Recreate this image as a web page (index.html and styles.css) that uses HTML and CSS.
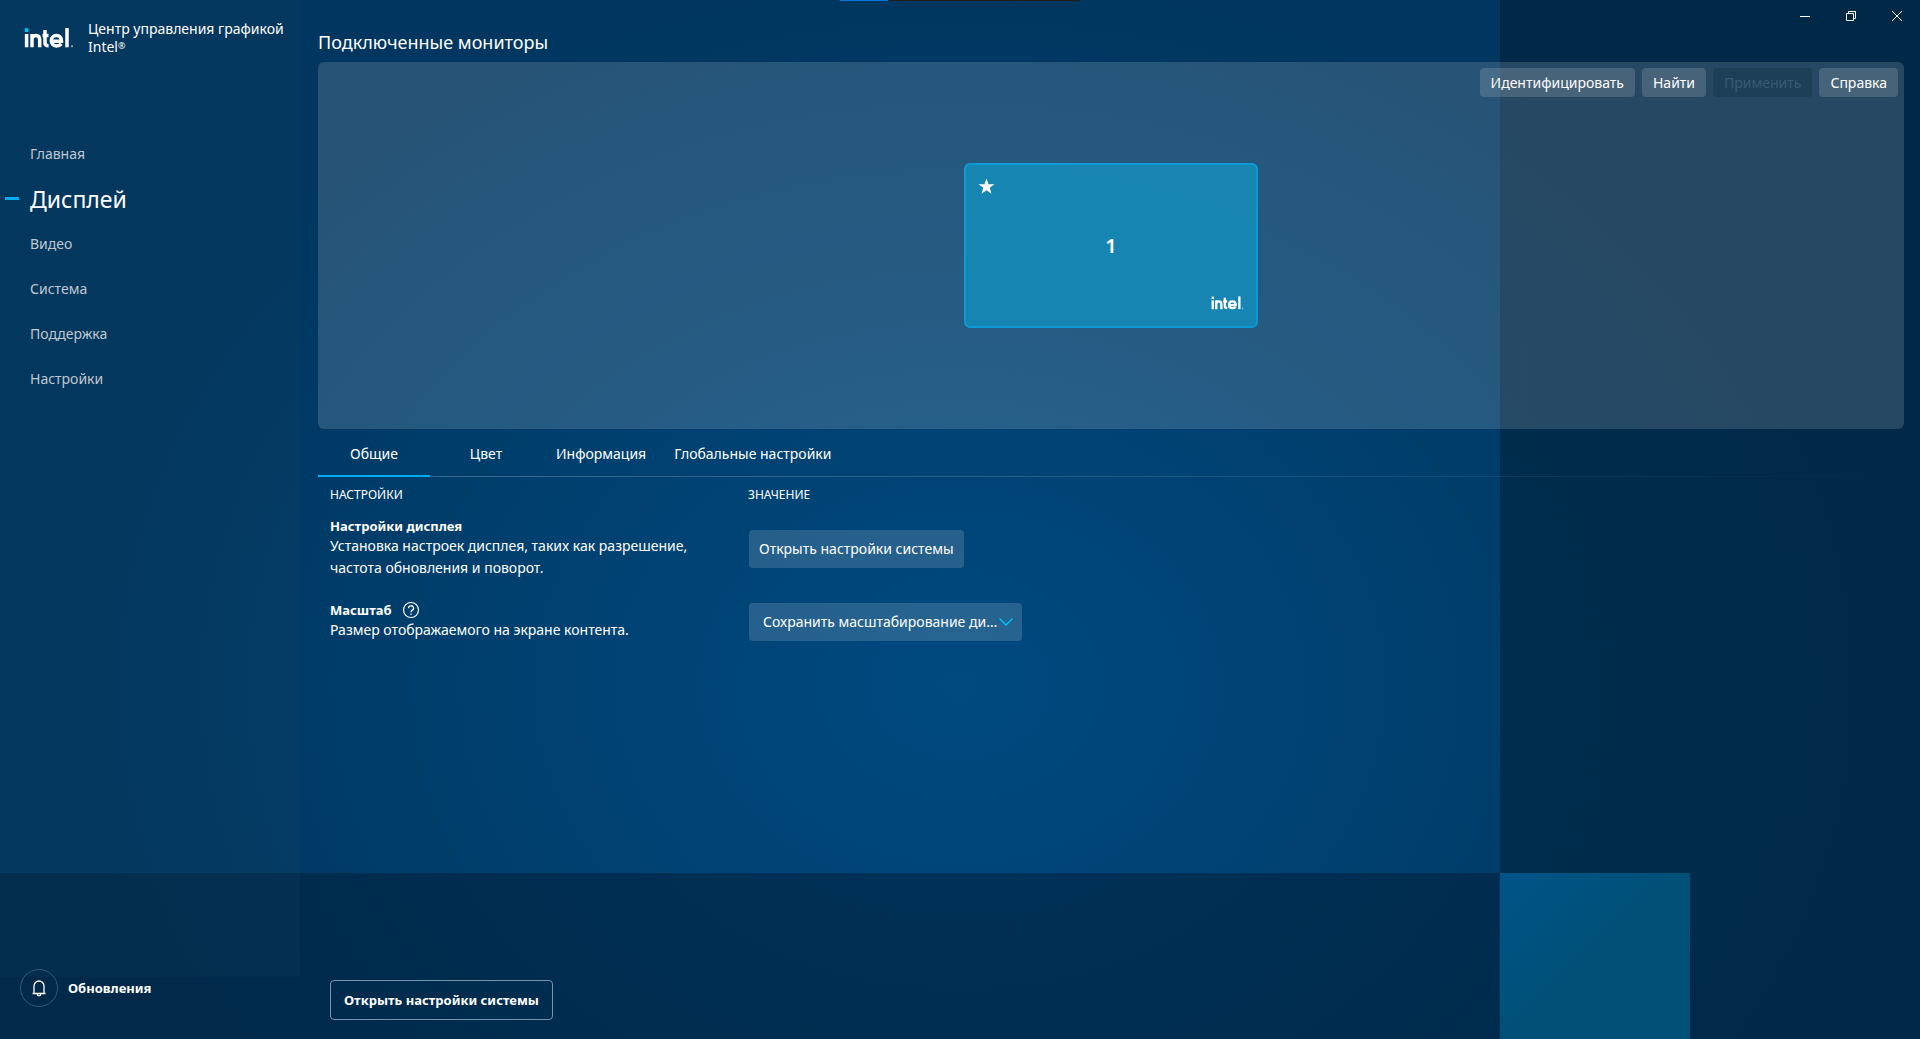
FILE: index.html
```html
<!DOCTYPE html>
<html lang="ru">
<head>
<meta charset="utf-8">
<title>Центр управления графикой Intel</title>
<link rel="stylesheet" href="styles.css">
</head>
<body>
<svg width="0" height="0" class="defs" aria-hidden="true">
  <symbol id="intel" viewBox="0 0 50 24">
    <g fill="none" stroke="#fff" stroke-width="3.5">
      <path d="M2.600 8V21.300"/>
      <path d="M8 21.300V8M8 14c0-3 1.700-4.500 4-4.500s3.700 1.500 3.700 4.300v7.500"/>
      <path d="M21 4v13c0 1.900 1 2.700 3.600 2.700M18.500 9.500h6"/>
      <path d="M28 15.200h9.500c0-3.600-2-5.700-5-5.700s-5.200 2.200-5.200 5.200 2.200 5.200 5.400 5.200c2 0 3.400-.6 4.600-2"/>
      <path d="M43 2v19.300"/>
    </g>
    <path d="M47 19.300h2v2h-2z" fill="#fff" opacity=".5"/>
    <path d="M.8 2.300h3.600v3.600H.8z"/>
  </symbol>
</svg>
<div class="app">
  <aside class="sidebar">
    <div class="brand">
      <svg class="brand-logo" role="img" aria-label="intel"><use href="#intel"/></svg>
      <span>Центр управления графикой Intel<span class="reg">®</span></span>
    </div>
    <nav class="nav">
      <a href="#">Главная</a>
      <a href="#" class="current" aria-current="page">Дисплей</a>
      <a href="#">Видео</a>
      <a href="#">Система</a>
      <a href="#">Поддержка</a>
      <a href="#">Настройки</a>
    </nav>
    <button class="updates" type="button">
      <span class="bell">
        <svg width="16" height="18" viewBox="0 0 16 18" fill="none" stroke="#fff" stroke-width="1.300"><path d="M1.500 14.500h13M3 14.500V7a5 5 0 0 1 10 0v7.500M6.200 15a1.800 1.800 0 0 0 3.600 0"/></svg>
      </span>
      Обновления
    </button>
  </aside>
  <main class="main">
    <div class="snap"><i></i></div>
    <header class="titlebar">
      <h1>Подключенные мониторы</h1>
      <div class="window-controls">
        <button type="button" aria-label="Свернуть"><svg width="12" height="12" viewBox="0 0 12 12"><path d="M1 6.500h10"/></svg></button>
        <button type="button" aria-label="Восстановить"><svg width="12" height="12" viewBox="0 0 12 12"><path d="M1.500 3.500h7v7h-7zM3.500 3.500v-2h7v7h-2"/></svg></button>
        <button type="button" aria-label="Закрыть"><svg width="12" height="12" viewBox="0 0 12 12"><path d="M1 1l10 10M11 1L1 11"/></svg></button>
      </div>
    </header>
    <section class="monitors">
      <div class="toolbar">
        <button type="button">Идентифицировать</button>
        <button type="button">Найти</button>
        <button type="button" disabled>Применить</button>
        <button type="button">Справка</button>
      </div>
      <div class="stage">
        <div class="monitor">
          <svg width="17" height="17" viewBox="0 0 17 17"><path fill="#fff" d="M8.500.5l2 5.700h6l-4.800 3.600 1.800 6-5-3.600-5 3.600 1.800-6L.5 6.200h6z"/></svg>
          <span class="number">1</span>
          <svg class="monitor-logo" role="img" aria-label="intel"><use href="#intel"/></svg>
        </div>
      </div>
    </section>
    <nav class="tabs">
      <a href="#" class="active" aria-current="true">Общие</a>
      <a href="#">Цвет</a>
      <a href="#">Информация</a>
      <a href="#">Глобальные настройки</a>
    </nav>
    <section class="settings">
      <div class="row head"><span>НАСТРОЙКИ</span><span>ЗНАЧЕНИЕ</span></div>
      <div class="row">
        <div class="label">
          <h2>Настройки дисплея</h2>
          <p>Установка настроек дисплея, таких как разрешение, частота обновления и поворот.</p>
        </div>
        <button class="control" type="button">Открыть настройки системы</button>
      </div>
      <div class="row">
        <div class="label">
          <h2><label for="scale">Масштаб</label>
            <svg width="18" height="18" viewBox="0 0 18 18" fill="none" stroke="#fff"><circle cx="9" cy="9" r="7.500" stroke-width="1.200"/><path d="M6.500 7.200a2.500 2.400 0 1 1 3.600 2.100c-.8.400-1.100.8-1.100 1.900" stroke-width="1.300"/><path d="M9 12.400v1.300" stroke-width="1.400"/></svg>
          </h2>
          <p>Размер отображаемого на экране контента.</p>
        </div>
        <div class="select">
          <select id="scale"><option>Сохранить масштабирование дисплея</option></select>
          <svg width="16" height="10" viewBox="0 0 16 10" fill="none" stroke="#00c7fd" stroke-width="1.300"><path d="M1.500 1.500L8 8l6.500-6.500"/></svg>
        </div>
      </div>
    </section>
    <footer><button class="outline" type="button">Открыть настройки системы</button></footer>
  </main>
</div>
</body>
</html>
```
FILE: styles.css
```css
* { box-sizing: border-box; }

body {
  margin: 0;
  color: #fff;
  font: 14px/20px "Noto Sans", sans-serif;
}

button, select { font: inherit; color: inherit; border: 0; background: none; padding: 0; margin: 0; }
a { color: inherit; text-decoration: none; }
h1, h2, p { margin: 0; }
.defs { display: block; position: absolute; }

.app {
  display: grid;
  grid-template-columns: 300px 1fr;
  min-height: 100vh;
  background:
    linear-gradient(135deg, #005487, #005078 50%) 86.7% 100% / 9.9% 16% no-repeat,
    linear-gradient(rgba(0, 30, 52, .54), rgba(0, 30, 52, .54)) 100% 0 / 21.9% 100% no-repeat,
    linear-gradient(rgba(0, 28, 52, .5), rgba(0, 28, 52, .5)) 0 100% / 78.1% 16% no-repeat,
    radial-gradient(ellipse 900px 720px at 50% 66%, #004a80, #00365f);
}

.sidebar {
  display: flex;
  flex-direction: column;
  padding: 20px 16px 32px 20px;
  background: linear-gradient(rgba(16, 60, 92, .25), rgba(16, 60, 92, .25)) 0 0 / 100% 94% no-repeat;
}
.brand { display: flex; align-items: center; gap: 14px; line-height: 18px; }
.brand-logo { flex: none; width: 50px; height: 24px; margin-left: 4px; fill: #00c7fd; }
.reg { font-size: 9px; line-height: 9px; vertical-align: 3px; }

.nav { display: flex; flex-direction: column; margin-top: 75px; }
.nav a {
  display: flex;
  align-items: center;
  height: 45px;
  padding-left: 10px;
  color: #c0c7cf;
}
.nav .current { position: relative; color: #fff; font-size: 23px; }
.nav .current::before {
  content: "";
  position: absolute;
  left: -15px;
  width: 14px;
  height: 3px;
  background: #00aeef;
}

.updates {
  display: flex;
  align-items: center;
  gap: 10px;
  margin-top: auto;
  font-size: 13px;
  font-weight: 700;
}
.bell {
  display: grid;
  place-items: center;
  width: 38px;
  height: 38px;
  border: 1px solid #335878;
  border-radius: 50%;
}

.main { display: flex; flex-direction: column; padding: 0 16px 19px 18px; position: relative; }
.snap { position: absolute; top: 0; left: 540px; width: 241px; height: 1px; background: #1f1f1f; }
.snap i { display: block; width: 48px; height: 1px; background: #0078d7; }

.titlebar { display: flex; justify-content: space-between; height: 62px; }
h1 { padding-top: 30px; font-size: 18px; font-weight: 400; line-height: 24px; }
.window-controls { display: flex; height: 32px; margin-right: -16px; }
.window-controls button { display: grid; place-items: center; width: 46px; }
.window-controls path { fill: none; stroke: #fff; }

.monitors {
  display: grid;
  grid-template-rows: 29px 1fr;
  min-height: 367px;
  padding: 6px;
  border-radius: 6px;
  background: rgba(255, 255, 255, .15);
}
.toolbar { display: flex; justify-content: flex-end; gap: 7px; }
.toolbar button { padding: 0 11px; border-radius: 4px; background: rgba(255, 255, 255, .15); }
.toolbar button:disabled { color: #3a5a74; background: rgba(20, 55, 75, .5); }
.stage { display: grid; place-items: center; padding-bottom: 29px; }
.monitor {
  display: grid;
  grid-template-rows: 1fr 20px 1fr;
  width: 294px;
  height: 165px;
  padding: 13px 12px;
  border: 2px solid #0c9ad6;
  border-radius: 6px;
  background: rgba(20, 144, 190, .8);
}
.number { justify-self: center; font-size: 20px; font-weight: 600; }
.monitor-logo { width: 33px; height: 20px; fill: #fff; align-self: end; justify-self: end; }

.tabs {
  display: flex;
  height: 48px;
  background: linear-gradient(90deg, rgba(255, 255, 255, .25), transparent) 0 100% / 100% 1px no-repeat;
}
.tabs a { min-width: 112px; padding: 15px 14px 0; text-align: center; }
.tabs .active { border-bottom: 2px solid #00aeef; }

.settings { padding: 8px 12px 0; }
.row { display: grid; grid-template-columns: 418px 1fr; justify-items: start; align-items: center; margin-bottom: 22px; }
.head { margin-bottom: 12px; font-size: 12px; }
.label { max-width: 380px; }
h2 { display: flex; align-items: center; gap: 10px; height: 18px; font-size: 13px; line-height: 18px; }
p { line-height: 22px; }
.control, .select { height: 38px; margin: 2px 0 0 1px; border-radius: 4px; background: rgba(255, 255, 255, .15); }
.control { padding: 0 10px; }
.select { display: flex; align-items: center; width: 273px; padding: 0 8px 0 14px; }
.select select { flex: 1; min-width: 0; appearance: none; text-overflow: ellipsis; }
.select svg { flex: none; }

footer { margin-top: auto; padding-left: 12px; }
.outline {
  height: 40px;
  padding: 0 13px;
  border: 1px solid #7a93a9;
  border-radius: 4px;
  font-size: 13px;
  font-weight: 700;
}
```
